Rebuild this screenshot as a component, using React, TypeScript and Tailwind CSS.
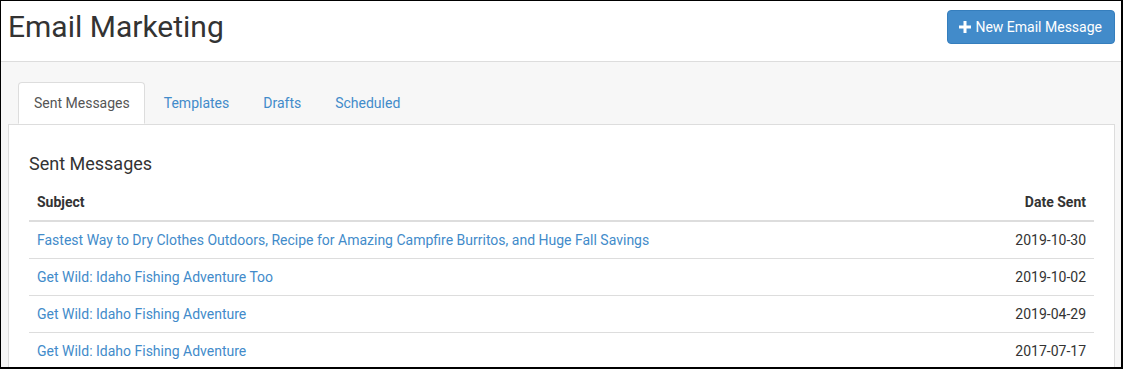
import { useState } from "react";

type Message = {
  id: number;
  subject: string;
  sent: string;
};

const MESSAGES: Message[] = [
  {
    id: 1,
    subject: "Fastest Way to Dry Clothes Outdoors, Recipe for Amazing Campfire Burritos, and Huge Fall Savings",
    sent: "2019-10-30",
  },
  { id: 2, subject: "Get Wild: Idaho Fishing Adventure Too", sent: "2019-10-02" },
  { id: 3, subject: "Get Wild: Idaho Fishing Adventure", sent: "2019-04-29" },
  { id: 4, subject: "Get Wild: Idaho Fishing Adventure", sent: "2017-07-17" },
];

const TABS = ["Sent Messages", "Templates", "Drafts", "Scheduled"];

export default function App() {
  const [tab, setTab] = useState("Sent Messages");

  return (
    <div
      className="w-[1123px] h-[369px] overflow-hidden bg-white border-t border-l border-r-2 border-b-2 border-black text-[14px] text-[#333]"
      style={{ fontFamily: "Roboto, 'Noto Sans', sans-serif" }}
    >
      {/* Header */}
      <div className="h-[61px] flex items-start justify-between border-b border-[#ddd]">
        <h1 className="ml-[7px] mt-[6px] text-[30px] leading-[40px] text-[#333]">Email Marketing</h1>
        <button className="mt-[9px] mr-[6px] h-[34px] pl-[11px] pr-[12px] flex items-center gap-[4px] rounded-[4px] bg-[#428bca] border border-[#357ebd] text-white text-[14px]">
          <svg width="12" height="12" viewBox="0 0 12 12" className="mt-[-1px]">
            <rect x="4.5" y="0" width="3" height="12" fill="white" />
            <rect x="0" y="4.5" width="12" height="3" fill="white" />
          </svg>
          New Email Message
        </button>
      </div>

      {/* Body */}
      <div className="h-full bg-[#f7f7f7] pl-[7px] pr-[6px] pt-[20px]">
        <div className="flex pl-[10px] gap-[4px]">
          {TABS.map((t) =>
            t === tab ? (
              <div
                key={t}
                className="h-[42px] pl-[15px] pr-[14px] flex items-center bg-white border border-[#ddd] border-b-white rounded-t-[4px] mb-[-1px] relative text-[#555]"
              >
                {t}
              </div>
            ) : (
              <button
                key={t}
                onClick={() => setTab(t)}
                className="h-[42px] px-[15px] flex items-center text-[#428bca]"
              >
                {t}
              </button>
            )
          )}
        </div>

        <div className="bg-white border border-[#ddd] px-[20px] pt-[28px] h-[300px]">
          <h2 className="text-[18px] leading-[22px] text-[#333]">{tab}</h2>

          <table className="w-full mt-[9px] border-collapse">
            <thead>
              <tr className="border-b-2 border-[#ddd]">
                <th className="text-left font-bold px-[8px] py-[8px] leading-[20px]">Subject</th>
                <th className="text-right font-bold px-[8px] py-[8px] leading-[20px]">Date Sent</th>
              </tr>
            </thead>
            <tbody>
              {MESSAGES.map((m) => (
                <tr key={m.id} className="border-b border-[#ddd]">
                  <td className="px-[8px] py-[8px] leading-[20px]">
                    <a href="#" className="text-[#428bca]">
                      {m.subject}
                    </a>
                  </td>
                  <td className="px-[8px] py-[8px] leading-[20px] text-right">{m.sent}</td>
                </tr>
              ))}
            </tbody>
          </table>
        </div>
      </div>
    </div>
  );
}
